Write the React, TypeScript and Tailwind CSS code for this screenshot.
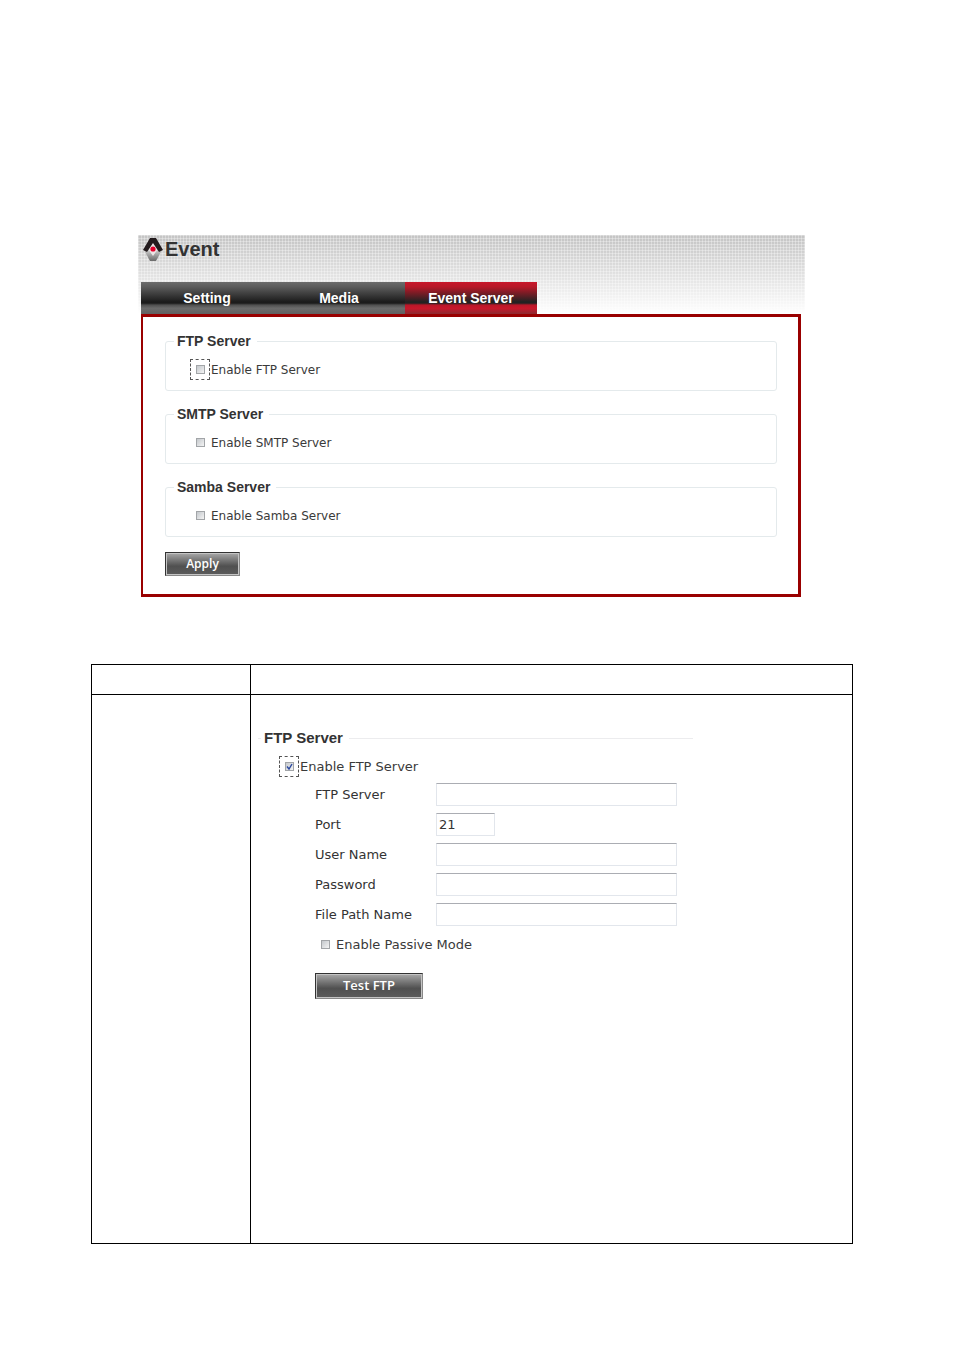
import { useState } from "react";
import clsx from "clsx";

const tabs = ["Setting", "Media", "Event Server"];

const servers = [
	{ id: "ftp", name: "FTP Server", focused: true },
	{ id: "smtp", name: "SMTP Server", focused: false },
	{ id: "samba", name: "Samba Server", focused: false },
];

const fields = [
	{ id: "host", label: "FTP Server", type: "text", value: "", width: "w-[241px]" },
	{ id: "port", label: "Port", type: "text", value: "21", width: "w-[59px]" },
	{ id: "user", label: "User Name", type: "text", value: "", width: "w-[241px]" },
	{ id: "password", label: "Password", type: "password", value: "", width: "w-[241px]" },
	{ id: "path", label: "File Path Name", type: "text", value: "", width: "w-[241px]" },
];

const Logo = () => (
	<svg viewBox="0 0 20 25" className="w-5 h-[25px]" aria-hidden="true">
		<defs>
			<linearGradient id="silver" x1="0" y1="0" x2="0" y2="1">
				<stop offset="0" stopColor="#d8d8d8" />
				<stop offset="0.5" stopColor="#a0a0a0" />
				<stop offset="1" stopColor="#6a6a6a" />
			</linearGradient>
		</defs>
		<path d="M10 5 L15 12 L10 20 L5 12 Z" fill="#ece4e5" />
		<path d="M1 13 L5 12 L10 19 L15 12 L19 13 L13 24 H7 Z" fill="url(#silver)" />
		<path d="M7 1 H13 L20 13 L16 15 L10 6 L4 15 L0 13 Z" fill="#241c1e" />
		<circle cx="10" cy="12" r="2.6" fill="#e4002b" />
	</svg>
);

const CheckRow = ({
	id,
	label,
	focused = false,
	initial = false,
	className,
}: {
	id: string;
	label: string;
	focused?: boolean;
	initial?: boolean;
	className?: string;
}) => {
	const [checked, setChecked] = useState(initial);

	return (
		<div className={clsx("flex items-center text-[#3a3a3a]", className)}>
			<span
				className={clsx(
					"flex items-center justify-center w-5 h-[21px] border border-dashed",
					focused ? "border-[#555]" : "border-transparent"
				)}
			>
				<span className="relative flex">
					<input
						id={id}
						type="checkbox"
						checked={checked}
						onChange={(e) => setChecked(e.target.checked)}
						className="appearance-none size-[9px] border border-[#a2a5a8] bg-linear-to-br from-[#c4c8cc] to-[#f4f4f4]"
					/>
					{checked && (
						<svg viewBox="0 0 9 9" className="absolute inset-0 size-[9px] pointer-events-none">
							<path d="M2 4.5 L4 7 L7 2" fill="none" stroke="#2b48a0" strokeWidth="1.4" />
						</svg>
					)}
				</span>
			</span>
			<label htmlFor={id} className="pl-px">
				{label}
			</label>
		</div>
	);
};

const Button = ({ children, className }: { children: React.ReactNode; className?: string }) => (
	<button
		type="button"
		className={clsx(
			"flex items-center justify-center border border-t-[#333] border-l-[#333] border-r-[#888] border-b-[#888] bg-linear-to-b from-[#aaa] via-[#505050] via-60% to-[#5c5c5c] font-['Open_Sans',sans-serif] font-semibold text-white shadow-[inset_0_0_0_1px_#c4c4c4]",
			className
		)}
	>
		{children}
	</button>
);

const EventPanel = () => {
	const [active, setActive] = useState("Event Server");

	return (
		<section className="ml-[138px] mr-[150px]">
			<header className="bg-[linear-gradient(to_bottom,transparent,#fff),repeating-linear-gradient(to_right,#ffffff50_0_1px,transparent_1px_3px),repeating-linear-gradient(to_bottom,#ffffff50_0_1px,transparent_1px_3px)] bg-[#c4c4c4] pl-[3px]">
				<div className="flex items-start h-[47px] pl-[2px] pt-[2px]">
					<Logo />
					<h1 className="pl-[2px] text-xl leading-6 font-bold text-[#333]">Event</h1>
				</div>
				<nav className="flex">
					{tabs.map((tab) => (
						<button
							key={tab}
							type="button"
							onClick={() => setActive(tab)}
							className={clsx(
								"w-[132px] h-8 text-sm font-bold text-white",
								tab === active
									? "bg-[linear-gradient(to_bottom,#c8182b_0%,#b81828_15%,#222_62%,#222_66%,#b81828_72%,#c8182b_82%,#8c2a30_100%)]"
									: "bg-[linear-gradient(to_bottom,#6c6c6c_0%,#5c5c5c_15%,#1c1c1c_62%,#1c1c1c_66%,#505050_72%,#6c6c6c_82%,#606060_100%)]"
							)}
						>
							{tab}
						</button>
					))}
				</nav>
			</header>

			<form className="ml-[3px] mr-1 border-2 border-t-3 border-r-3 border-b-3 border-[#990000] bg-white pl-[22px] pr-[21px] pt-[15px] pb-[18px]">
				<div className="flex flex-col gap-[14px]">
					{servers.map((server) => (
						<fieldset key={server.id} className="rounded-[3px] border border-[#e4eaec] px-2 pb-[10px]">
							<legend className="h-[18px] pl-[3px] pr-[6px] text-sm leading-[18px] font-bold text-[#333]">
								{server.name}
							</legend>
							<CheckRow
								id={`enable-${server.id}`}
								label={`Enable ${server.name}`}
								focused={server.focused}
								className="mt-[9px] ml-4 font-['DejaVu_Sans',sans-serif] text-xs"
							/>
						</fieldset>
					))}
				</div>
				<Button className="mt-[15px] w-[75px] h-6 text-xs">Apply</Button>
			</form>
		</section>
	);
};

const FtpSettings = () => (
	<fieldset className="ml-[7px] w-[435px] max-w-full border-t border-[#ececee] pl-[3px]">
		<legend className="h-5 pl-[3px] pr-[6px] text-[15px] leading-5 font-bold text-[#333]">FTP Server</legend>
		<div className="font-['DejaVu_Sans',sans-serif] text-[13px] text-[#333]">
			<CheckRow id="ftp-enabled" label="Enable FTP Server" focused initial className="mt-2 ml-[18px]" />
			<div className="mt-[6px] ml-[54px] flex flex-col gap-[7px]">
				{fields.map((field) => (
					<div key={field.id} className="flex items-center">
						<label htmlFor={field.id} className="w-[121px]">
							{field.label}
						</label>
						<input
							id={field.id}
							type={field.type}
							defaultValue={field.value}
							className={clsx(
								"h-[23px] border border-[#e2e6ec] border-t-[#abadb3] px-[2px] outline-none",
								field.width
							)}
						/>
					</div>
				))}
			</div>
			<CheckRow id="passive" label="Enable Passive Mode" className="mt-2 ml-[54px]" />
			<Button className="mt-[18px] ml-[54px] w-[108px] h-[26px] text-[13px]">Test FTP</Button>
		</div>
	</fieldset>
);

export default function App() {
	return (
		<main className="bg-white pt-[235px] pb-[106px] font-['Liberation_Sans',Arial,sans-serif]">
			<EventPanel />
			<div className="mt-[67px] ml-[91px] mr-[102px]">
				<table className="w-full border-collapse">
					<thead>
						<tr className="h-[30px]">
							<th scope="col" className="w-[159px] border border-black" />
							<th scope="col" className="border border-black" />
						</tr>
					</thead>
					<tbody>
						<tr>
							<td className="border border-black" />
							<td className="border border-black pt-[33px] pb-[244px]">
								<FtpSettings />
							</td>
						</tr>
					</tbody>
				</table>
			</div>
		</main>
	);
}
